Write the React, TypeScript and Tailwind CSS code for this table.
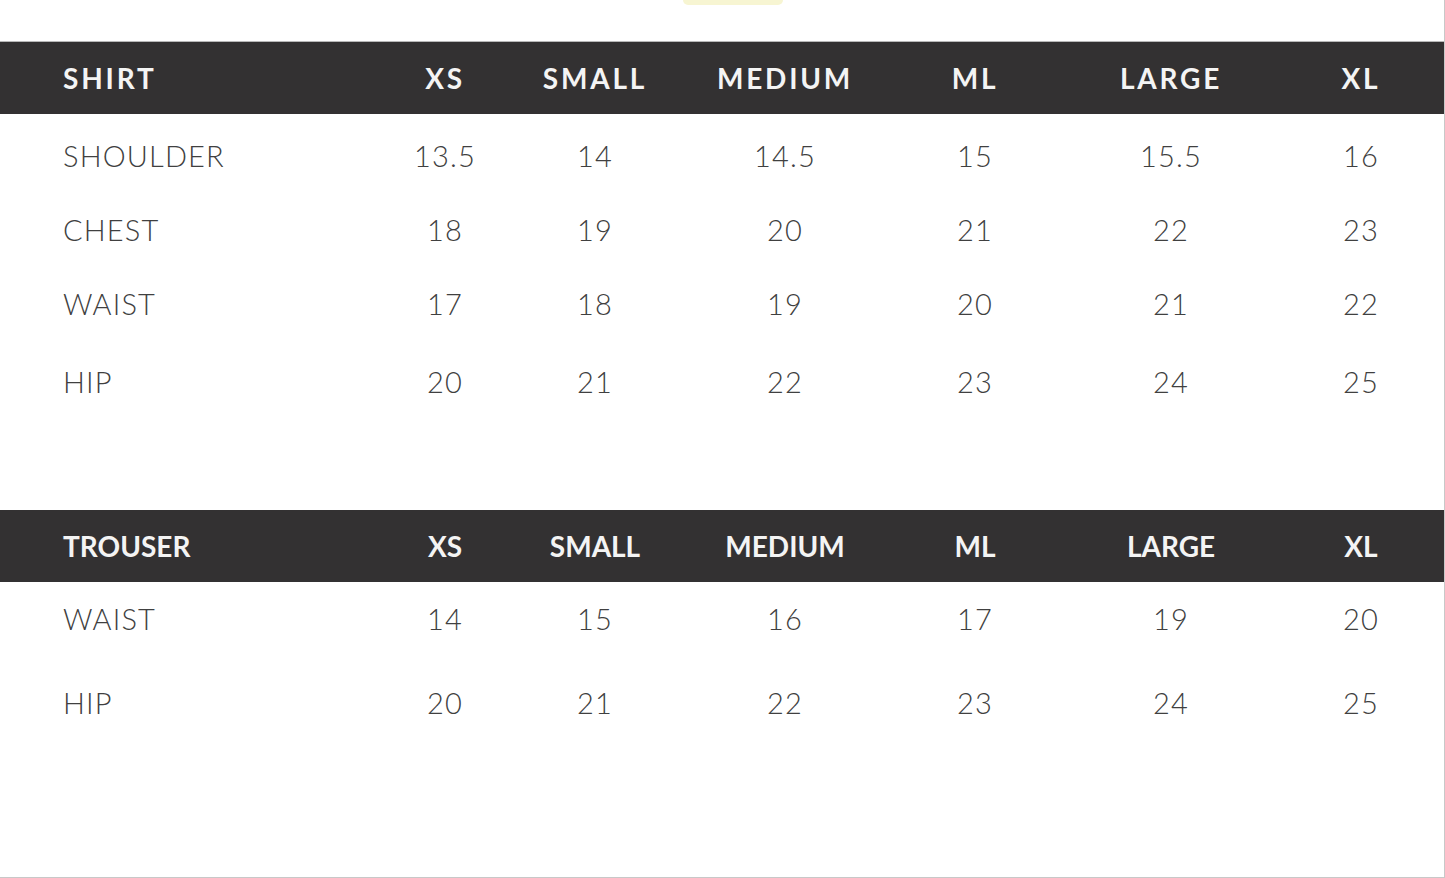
import React from "react";

const cols = ["w-[307px]", "w-[150px]", "w-[150px]", "w-[230px]", "w-[150px]", "w-[242px]", "w-[138px]"];

function Row({ cells, h, header, tight }: { cells: string[]; h: string; header?: boolean; tight?: boolean }) {
  return (
    <div className={`flex items-center pl-[63px] ${h}`}>
      {cells.map((c, i) => (
        <div
          key={i}
          className={`${cols[i]} shrink-0 ${i === 0 ? "text-left" : "text-center"} ${
            header
              ? `text-[#f4f4f4] font-bold ${tight ? "text-[28px] tracking-[0em]" : "text-[28px] tracking-[0.1em]"}`
              : "text-[#404040] text-[29px] font-light tracking-[0.04em]"
          }`}
        >
          {c}
        </div>
      ))}
    </div>
  );
}

export default function App() {
  return (
    <div
      className="w-[1445px] h-[878px] bg-white border-r border-b border-[#c8c8c8] overflow-hidden flex flex-col"
      style={{ fontFamily: "Lato, 'Open Sans', sans-serif" }}
    >
      <div className="h-[41px] shrink-0 flex justify-center">
        <div className="ml-[22px] w-[100px] h-[5px] rounded-b-full bg-[#f7f5d2]" />
      </div>
      <div className="shrink-0 bg-[#333132] border-t border-[#b8b8b8]">
        <Row header h="h-[72px]" cells={["SHIRT", "XS", "SMALL", "MEDIUM", "ML", "LARGE", "XL"]} />
      </div>
      <div className="pt-[5px] shrink-0">
        <Row h="h-[74px]" cells={["SHOULDER", "13.5", "14", "14.5", "15", "15.5", "16"]} />
        <Row h="h-[74px]" cells={["CHEST", "18", "19", "20", "21", "22", "23"]} />
        <Row h="h-[73px]" cells={["WAIST", "17", "18", "19", "20", "21", "22"]} />
        <Row h="h-[84px]" cells={["HIP", "20", "21", "22", "23", "24", "25"]} />
      </div>
      <div className="h-[86px] shrink-0" />
      <div className="shrink-0 bg-[#333132]">
        <Row header tight h="h-[72px]" cells={["TROUSER", "XS", "SMALL", "MEDIUM", "ML", "LARGE", "XL"]} />
      </div>
      <div className="shrink-0">
        <Row h="h-[74px]" cells={["WAIST", "14", "15", "16", "17", "19", "20"]} />
        <Row h="h-[94px]" cells={["HIP", "20", "21", "22", "23", "24", "25"]} />
      </div>
    </div>
  );
}
